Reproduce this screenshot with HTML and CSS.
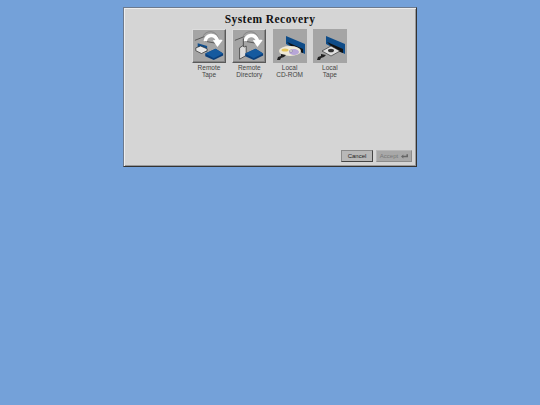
FILE: index.html
```html
<!DOCTYPE html>
<html lang="en">
<head>
  <meta charset="UTF-8" />
  <title>System Recovery</title>
  <link rel="stylesheet" href="styles.css">
</head>
<body>
  <svg class="defs" width="0" height="0">
    <!-- shared pieces of the icons -->
    <symbol id="arrow" viewBox="0 0 34 34">
      <path d="M2 11 L12 7 M13 12 L24 14 L32 10" stroke="#333" stroke-width="0.7" fill="none"/>
      <path d="M11 6 C14 0 25 0 27 9" stroke="#777" stroke-width="0.7" fill="none"/>
      <path d="M13 12 C14 5 23 3 26 11" stroke="#fff" stroke-width="3.6" fill="none"/>
      <path d="M21 11 L32 10 L26 18 Z" fill="#fff"/>
    </symbol>
    <symbol id="box" viewBox="0 0 34 34">
      <path d="M13 25 L24 20 L32 25 L32 27 L22 32 L13 28 Z" fill="#0b3f7a"/>
      <path d="M13 25 L24 20 L32 25 L22 30 Z" fill="#155a9f"/>
    </symbol>
    <symbol id="slot" viewBox="0 0 34 34">
      <path d="M13 7 L32 15 L32 25 L28 23 L13 15 Z" fill="#0f4c88"/>
      <path d="M14 13 L30 20 L30 24 L22 21 Z" fill="#111"/>
    </symbol>
    <symbol id="plug" viewBox="0 0 34 34">
      <path d="M4 31 L5 28 L8 27 L8 25 L13 26 L11 28 L8 29 L7 31 Z" fill="#222"/>
    </symbol>
  </svg>

  <div class="dialog">
    <h1 class="title">System Recovery</h1>

    <div class="options">
      <div class="option">
        <div class="tile raised">
          <svg viewBox="0 0 34 34">
            <use href="#arrow"/>
            <path d="M5 14 L15 17 L15 23 L5 20 Z" fill="#10508f"/>
            <path d="M3 19 L8 17 L15 20 L15 22 L9 25 L3 22 Z" fill="#e8e8e8" stroke="#222" stroke-width="0.7"/>
            <use href="#box"/>
          </svg>
        </div>
        <span class="label">Remote<br>Tape</span>
      </div>
      <div class="option">
        <div class="tile raised">
          <svg viewBox="0 0 34 34">
            <use href="#arrow"/>
            <path d="M7 19 L10 17 L12 18 L14 17 L14 27 L7 31 Z" fill="#dcdcdc" stroke="#222" stroke-width="0.7"/>
            <path d="M11 17 L11 9" stroke="#222" stroke-width="0.7"/>
            <use href="#box"/>
          </svg>
        </div>
        <span class="label">Remote<br>Directory</span>
      </div>
      <div class="option">
        <div class="tile">
          <svg viewBox="0 0 34 34">
            <use href="#slot"/>
            <ellipse cx="17" cy="22" rx="11" ry="5" fill="#efe9d8"/>
            <ellipse cx="21" cy="23" rx="5" ry="3" fill="#b7a6d8"/>
            <ellipse cx="12" cy="21" rx="3.5" ry="1.6" fill="#e5c45a"/>
            <ellipse cx="18" cy="22" rx="1.6" ry="1" fill="#fff" stroke="#444" stroke-width="0.4"/>
            <use href="#plug"/>
          </svg>
        </div>
        <span class="label">Local<br>CD-ROM</span>
      </div>
      <div class="option">
        <div class="tile">
          <svg viewBox="0 0 34 34">
            <use href="#slot"/>
            <path d="M9 22 L18 17 L27 22 L18 27 Z" fill="#dedede" stroke="#222" stroke-width="0.6"/>
            <ellipse cx="18" cy="21.5" rx="3" ry="1.8" fill="#333"/>
            <use href="#plug"/>
          </svg>
        </div>
        <span class="label">Local<br>Tape</span>
      </div>
    </div>

    <div class="buttons">
      <button class="btn">Cancel</button>
      <button class="btn btn-accept">Accept
        <svg class="enter" viewBox="0 0 9 6"><path d="M0 3 L3 0.5 L3 2 L7 2 L7 0 L9 0 L9 4 L3 4 L3 5.5 Z" fill="#666"/></svg>
      </button>
    </div>
  </div>
</body>
</html>
```

FILE: styles.css
```css
body {
  margin: 0;
  height: 405px;
  overflow: hidden;
  background-color: #74a1d9;
  font-family: "Liberation Sans", Arial, sans-serif;
}

.defs {
  display: block;
  height: 0;
}

/* Dialog */
.dialog {
  box-sizing: border-box;
  width: 294px;
  height: 160px;
  margin: 7px 0 0 123px;
  padding: 5px 4px 4px 4px;
  display: flex;
  flex-direction: column;
  background-color: #d5d5d5;
  border: 1px solid;
  border-color: #6c7a8e #333 #333 #6c7a8e;
  box-shadow: inset 1px 1px 0 #eee, inset -1px -1px 0 #9a9a9a;
}

.title {
  margin: 0;
  text-align: center;
  font-family: "Liberation Serif", serif;
  font-size: 11.5px;
  line-height: 12px;
  font-weight: bold;
  letter-spacing: 0.45px;
  color: #111;
}

/* Icon row */
.options {
  display: flex;
  justify-content: flex-start;
  gap: 6.3px;
  margin: 4px 0 0 64px;
}

.option {
  width: 34px;
  display: flex;
  flex-direction: column;
  align-items: center;
}

.tile {
  box-sizing: border-box;
  width: 34px;
  height: 34px;
  background-color: #a5a5a5;
}

.tile svg {
  display: block;
  width: 100%;
  height: 100%;
}

.tile.raised {
  border: 1px solid;
  border-color: #dcdcdc #5a5a5a #5a5a5a #dcdcdc;
  box-shadow: inset -1px -1px 0 #858585;
}

.label {
  margin-top: 2px;
  font-size: 6.5px;
  line-height: 6.5px;
  text-align: center;
  white-space: nowrap;
  color: #444;
}

/* Buttons */
.buttons {
  margin-top: auto;
  display: flex;
  justify-content: flex-end;
  gap: 3px;
}

.btn {
  box-sizing: border-box;
  width: 32px;
  height: 12px;
  padding: 0;
  display: flex;
  align-items: center;
  justify-content: center;
  gap: 3px;
  font-family: "Liberation Sans", Arial, sans-serif;
  font-size: 6px;
  color: #222;
  background-color: #b8b8b8;
  border: 1px solid;
  border-color: #8a8a8a #444 #444 #8a8a8a;
}

.btn-accept {
  width: 36px;
  color: #777;
  background-color: #a8a8a8;
  border-color: #b8b8b8 #8c8c8c #8c8c8c #b8b8b8;
}

.enter {
  width: 7px;
  height: 5px;
}
```
